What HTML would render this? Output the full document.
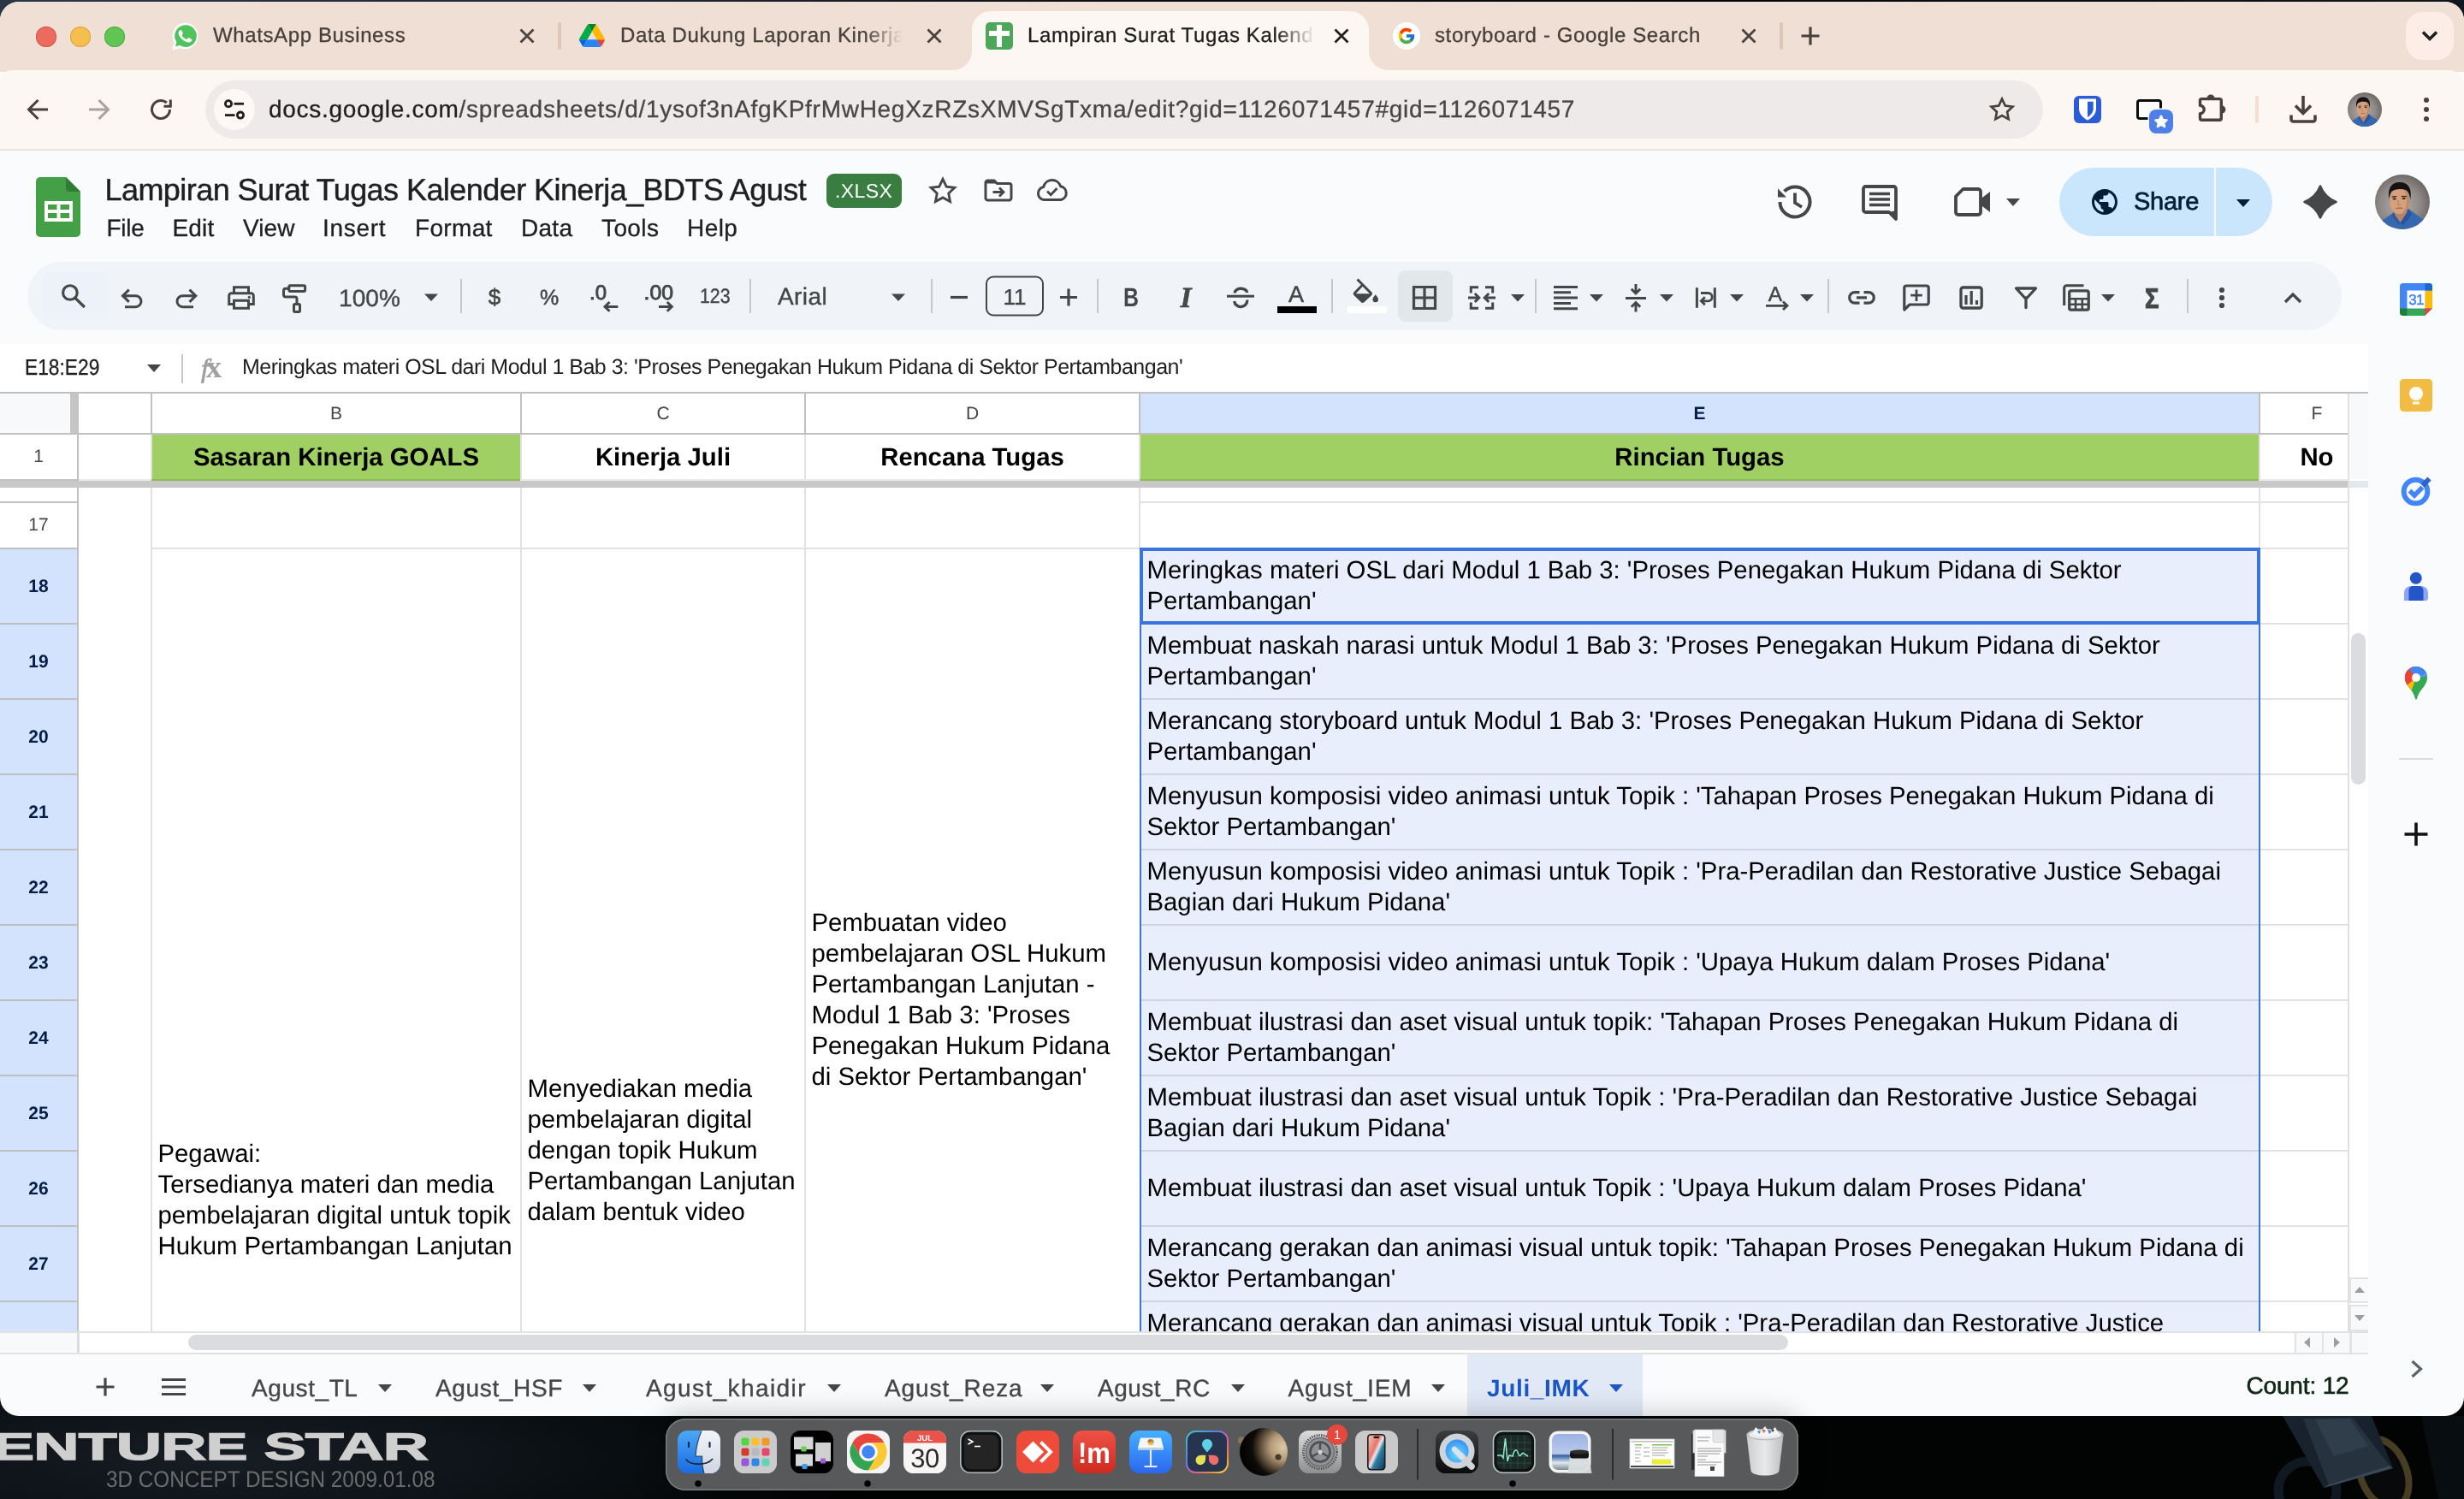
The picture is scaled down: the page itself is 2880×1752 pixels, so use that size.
<!DOCTYPE html>
<html lang="id">
<head>
<meta charset="utf-8">
<title>Lampiran Surat Tugas Kalender Kinerja_BDTS Agust - Google Sheets</title>
<style>
*{box-sizing:border-box;margin:0;padding:0}
html,body{width:2880px;height:1752px;overflow:hidden;background:#000}
body{font-family:"Liberation Sans",sans-serif;color:#1f1f1f;position:relative;-webkit-font-smoothing:antialiased;text-rendering:geometricPrecision}
#root{position:absolute;left:0;top:0;width:2880px;height:1752px;will-change:transform}
.abs{position:absolute}
svg{position:absolute;overflow:visible}
.t{position:absolute;white-space:nowrap;line-height:1}
/* desktop */
#desk{position:absolute;left:0;top:0;width:2880px;height:1752px;background:
 radial-gradient(ellipse 760px 150px at 260px 1705px,#161d24 0%,#0b1014 55%,rgba(0,0,0,0) 100%),
 #020303}
#desktop-top{position:absolute;left:0;top:0;width:2880px;height:24px;background:linear-gradient(90deg,#2a3646 0%,#1e2836 25%,#0b0f14 45%,#05070a 70%,#10161d 100%)}
/* window */
#win{position:absolute;left:0;top:2px;width:2880px;height:1653px;border-radius:22px 22px 22px 22px;overflow:hidden;background:#f9fbfd}
#tabstrip{position:absolute;left:0;top:0;width:2880px;height:82px;background:#f0dfd5}
#toolbar{position:absolute;left:0;top:80px;width:2880px;height:92px;background:#fdf7f3;border-radius:14px 18px 0 0}
#toolbar-line{position:absolute;left:0;top:172px;width:2880px;height:2px;background:#ebe1dc}
.tabtitle{position:absolute;-webkit-text-stroke:.3px currentColor;white-space:nowrap;font-size:24px;line-height:30px;top:27px;color:#47403b;letter-spacing:.62px}
.gridtxt{position:absolute;margin-top:1px;white-space:nowrap;font-size:29.33px;line-height:36px;color:#000}
.rowh{position:absolute;left:0;width:90px;text-align:center;font-size:21px;color:#444746}
.rowh.sel{background:#d3e3fd;color:#041e49;font-weight:bold}
.colh{position:absolute;top:460px;height:46px;line-height:47.500px;text-align:center;font-size:21px;color:#444746;background:#fff}
.hl{position:absolute;height:2px;background:#e1e1e1}
.vl{position:absolute;width:2px;background:#e1e1e1}
.sheettab{position:absolute;top:1606px;-webkit-text-stroke:.35px currentColor;white-space:nowrap;font-size:28px;line-height:34px;color:#444746}
.dd{position:absolute;width:0;height:0;border-left:8px solid transparent;border-right:8px solid transparent;border-top:9px solid #444746}
.tbsep{position:absolute;top:324px;width:2px;height:40px;background:#c7c7c7}
</style>
</head>
<body>
<div id="root">
<div id="desk"></div>
<div id="desktop-top"></div>
<div class="t" style="left:-9px;top:1669.500px;font-size:44.500px;font-weight:bold;color:#cfcfcf;letter-spacing:-.5px;transform:scaleX(1.655);transform-origin:0 0;-webkit-text-stroke:1.300px #cfcfcf">ENTURE STAR</div>
<div class="t" style="left:124px;top:1716px;font-size:27px;color:#6c6c6c;transform:scaleX(.9);transform-origin:0 0">3D CONCEPT DESIGN 2009.01.08</div>
<svg id="deskobj" style="left:2600px;top:1650px" width="280" height="102" viewBox="2600 1650 280 102"><circle cx="2697" cy="1742" r="34" fill="none" stroke="#101921" stroke-width="11"/><ellipse cx="2786" cy="1722" rx="27" ry="42" fill="#07090b" stroke="#463d22" stroke-width="8" transform="rotate(-22 2786 1722)"/><path d="M2668 1655L2772 1655L2797 1716L2716 1739Z" fill="#18222c"/><path d="M2692 1658L2750 1657L2793 1713L2722 1735Z" fill="#26333f"/><path d="M2706 1659L2746 1658L2768 1690L2728 1702Z" fill="#303e4b"/><path d="M2722 1735L2793 1713L2797 1716L2716 1739Z" fill="#3a4754"/><path d="M2830 1655L2880 1655L2880 1752L2850 1752Z" fill="#080d12"/></svg>
<div id="win">
 <div id="tabstrip"></div>
 <div id="toolbar"></div>
 <div id="toolbar-line"></div>
</div>
<!-- traffic lights -->
<div class="abs" style="left:42px;top:31px;width:24px;height:24px;border-radius:50%;background:#ed6a5e;box-shadow:inset 0 0 0 1px #d5554a"></div>
<div class="abs" style="left:82px;top:31px;width:24px;height:24px;border-radius:50%;background:#f5bf4f;box-shadow:inset 0 0 0 1px #d9a33c"></div>
<div class="abs" style="left:122px;top:31px;width:24px;height:24px;border-radius:50%;background:#61c554;box-shadow:inset 0 0 0 1px #4faa43"></div>
<!-- active tab shape -->
<svg style="left:0;top:0" width="2880" height="90" viewBox="0 0 2880 90"><path d="M1114 82A22 22 0 0 0 1136 60V35A22 22 0 0 1 1158 13H1578A22 22 0 0 1 1600 35V60A22 22 0 0 0 1622 82Z" fill="#fdf7f3"/></svg>
<!-- tab 1: WhatsApp -->
<svg style="left:199px;top:25px" width="36" height="36" viewBox="0 0 36 36"><path d="M18 1.6A15.4 15.4 0 0 0 4.7 24.8L2.2 33.6l9-2.4A15.4 15.4 0 1 0 18 1.6Z" fill="#fff"/><path d="M18 4.3a12.8 12.8 0 0 0-10.9 19.5l.3.5-1.4 5 5.2-1.4.5.3A12.8 12.8 0 1 0 18 4.3Z" fill="#50c35c"/><path d="M13.2 10.4c-.3-.7-.6-.7-.9-.7h-.8c-.3 0-.7.1-1.1.5-.4.4-1.4 1.4-1.4 3.400 0 2 1.500 3.900 1.700 4.200.2.300 2.900 4.600 7.100 6.200 3.500 1.400 4.200 1.100 5 1 .800-.1 2.400-1 2.800-1.900.300-1 .300-1.800.200-1.900-.1-.2-.4-.3-.8-.5l-2.800-1.400c-.4-.1-.7-.2-1 .2-.3.400-1.100 1.400-1.300 1.600-.2.300-.5.300-.9.100-.4-.2-1.700-.6-3.300-2-1.200-1.100-2-2.400-2.300-2.800-.2-.4 0-.6.200-.8l.6-.7c.2-.200.300-.4.400-.7.100-.3.100-.5 0-.7z" fill="#fff" transform="translate(1.2,1.2) scale(.93)"/></svg>
<div class="tabtitle" style="left:249px">WhatsApp Business</div>
<svg style="left:606px;top:32px" width="20" height="20" viewBox="0 0 20 20"><path d="M2.500 2.500L17.500 17.500M17.500 2.500L2.500 17.500" stroke="#47403b" stroke-width="2.800" fill="none"/></svg>
<div class="abs" style="left:652px;top:26px;width:4px;height:32px;border-radius:2px;background:#dcc6b9"></div>
<!-- tab 2: Drive -->
<svg style="left:677px;top:28px" width="30" height="27" viewBox="0 0 87.3 78"><path d="m6.6 66.850 3.850 6.650c.8 1.400 1.950 2.500 3.300 3.300l13.750-23.800h-27.500c0 1.550.4 3.100 1.200 4.500z" fill="#0066da"/><path d="m43.650 25-13.750-23.800c-1.350.8-2.500 1.900-3.300 3.300l-25.400 44a9.060 9.060 0 0 0 -1.200 4.500h27.500z" fill="#00ac47"/><path d="m73.550 76.800c1.350-.8 2.500-1.900 3.300-3.300l1.600-2.750 7.650-13.250c.8-1.400 1.200-2.950 1.200-4.500h-27.502l5.852 11.500z" fill="#ea4335"/><path d="m43.650 25 13.750-23.800c-1.350-.8-2.900-1.200-4.500-1.200h-18.500c-1.600 0-3.150.45-4.500 1.200z" fill="#00832d"/><path d="m59.800 53h-32.300l-13.750 23.800c1.350.8 2.900 1.200 4.500 1.200h50.800c1.600 0 3.150-.45 4.500-1.200z" fill="#2684fc"/><path d="m73.400 26.500-12.700-22c-.8-1.400-1.950-2.500-3.300-3.300l-13.750 23.800 16.150 28h27.450c0-1.550-.4-3.100-1.200-4.500z" fill="#ffba00"/></svg>
<div class="tabtitle" style="left:725px;width:332px;overflow:hidden;-webkit-mask-image:linear-gradient(90deg,#000 0,#000 285px,transparent 330px);mask-image:linear-gradient(90deg,#000 0,#000 285px,transparent 330px)">Data Dukung Laporan Kinerja - Google Drive</div>
<svg style="left:1082px;top:32px" width="20" height="20" viewBox="0 0 20 20"><path d="M2.500 2.500L17.500 17.500M17.500 2.500L2.500 17.500" stroke="#47403b" stroke-width="2.800" fill="none"/></svg>
<!-- tab 3: Sheets (active) -->
<div class="abs" style="left:1152px;top:26px;width:32px;height:32px;border-radius:5px;background:#4ca75b"></div>
<div class="abs" style="left:1165px;top:29px;width:6px;height:26px;background:#fff"></div>
<div class="abs" style="left:1156px;top:36px;width:24px;height:6px;background:#fff"></div>
<div class="tabtitle" style="left:1201px;width:338px;color:#1f1f1f;overflow:hidden;-webkit-mask-image:linear-gradient(90deg,#000 0,#000 290px,transparent 336px);mask-image:linear-gradient(90deg,#000 0,#000 290px,transparent 336px)">Lampiran Surat Tugas Kalender Kinerja_BDTS Agust - Google Sheets</div>
<svg style="left:1558px;top:32px" width="20" height="20" viewBox="0 0 20 20"><path d="M2.500 2.500L17.500 17.500M17.500 2.500L2.500 17.500" stroke="#1f1f1f" stroke-width="2.800" fill="none"/></svg>
<!-- tab 4: Google -->
<div class="abs" style="left:1628px;top:26px;width:32px;height:32px;border-radius:50%;background:#fff"></div>
<svg style="left:1633px;top:31px" width="22" height="22" viewBox="0 0 48 48"><path fill="#ffc107" d="M43.600 20.100H42V20H24v8h11.300c-1.600 4.700-6.100 8-11.300 8-6.600 0-12-5.400-12-12s5.400-12 12-12c3.100 0 5.800 1.200 8 3l5.700-5.700C34 6.100 29.300 4 24 4 13 4 4 13 4 24s9 20 20 20 20-9 20-20c0-1.300-.1-2.600-.4-3.900z"/><path fill="#ff3d00" d="M6.300 14.700l6.600 4.800C14.700 15.100 19 12 24 12c3.100 0 5.800 1.200 8 3l5.700-5.700C34 6.100 29.300 4 24 4 16.300 4 9.700 8.300 6.300 14.700z"/><path fill="#4caf50" d="M24 44c5.200 0 9.900-2 13.400-5.200l-6.200-5.200A11.900 11.900 0 0 1 24 36c-5.200 0-9.600-3.300-11.300-7.900l-6.500 5C9.500 39.600 16.200 44 24 44z"/><path fill="#1976d2" d="M43.600 20.100H42V20H24v8h11.300a12 12 0 0 1-4.100 5.600l6.200 5.200C37 39.200 44 34 44 24c0-1.300-.1-2.600-.4-3.900z"/></svg>
<div class="tabtitle" style="left:1677px">storyboard - Google Search</div>
<svg style="left:2034px;top:32px" width="20" height="20" viewBox="0 0 20 20"><path d="M2.500 2.500L17.500 17.500M17.500 2.500L2.500 17.500" stroke="#47403b" stroke-width="2.800" fill="none"/></svg>
<div class="abs" style="left:2080px;top:26px;width:4px;height:32px;border-radius:2px;background:#dcc6b9"></div>
<svg style="left:2104px;top:30px" width="24" height="24" viewBox="0 0 24 24"><path d="M12 1.500V22.500M1.500 12H22.500" stroke="#47403b" stroke-width="3.200" fill="none"/></svg>
<!-- tab search -->
<div class="abs" style="left:2812px;top:14px;width:56px;height:56px;border-radius:20px;background:#fceee7"></div>
<svg style="left:2828px;top:32px" width="24" height="20" viewBox="0 0 24 20"><path d="M4 5.500L12 13.500L20 5.500" stroke="#1f1f1f" stroke-width="3.600" fill="none"/></svg>
<!-- nav buttons -->
<svg style="left:28px;top:112px" width="32" height="32" viewBox="0 0 32 32"><path d="M28 16H6M16.500 5L5.500 16L16.500 27" stroke="#47403b" stroke-width="3" fill="none"/></svg>
<svg style="left:100px;top:112px" width="32" height="32" viewBox="0 0 32 32"><path d="M4 16H26M15.500 5L26.500 16L15.500 27" stroke="#a9a19c" stroke-width="3" fill="none"/></svg>
<svg style="left:172px;top:112px" width="32" height="32" viewBox="0 0 32 32"><path d="M26.500 16A10.500 10.500 0 1 1 22.800 8" stroke="#47403b" stroke-width="3" fill="none"/><path d="M27.300 4.500V12.300H19.500" stroke="#47403b" stroke-width="3" fill="none"/></svg>
<!-- omnibox -->
<div class="abs" style="left:240px;top:94px;width:2148px;height:68px;border-radius:34px;background:#eeeaea"></div>
<div class="abs" style="left:250px;top:104px;width:48px;height:48px;border-radius:50%;background:#fdf8f5"></div>
<svg style="left:258px;top:112px" width="32" height="32" viewBox="0 0 32 32"><circle cx="9" cy="9.300" r="3.600" stroke="#1f1f1f" stroke-width="2.800" fill="none"/><path d="M15.500 9.300H27" stroke="#1f1f1f" stroke-width="2.800"/><path d="M5 22.600H16.500" stroke="#1f1f1f" stroke-width="2.800"/><circle cx="23" cy="22.600" r="3.600" stroke="#1f1f1f" stroke-width="2.800" fill="none"/></svg>
<div class="t" style="left:314px;top:113.500px;font-size:28px;letter-spacing:.72px;color:#474747;-webkit-text-stroke:.3px currentColor"><span style="color:#1f1f1f">docs.google.com</span>/spreadsheets/d/1ysof3nAfgKPfrMwHegXzRZsXMVSgTxma/edit?gid=1126071457#gid=1126071457</div>
<svg style="left:2323px;top:111px" width="34" height="34" viewBox="0 0 24 24"><path d="M12 3.300l2.650 5.600 6.100.8-4.450 4.250 1.100 6.050L12 17.050 6.600 20l1.100-6.050L3.250 9.700l6.100-.8z" stroke="#47403b" stroke-width="1.900" fill="none" stroke-linejoin="miter"/></svg>
<!-- extensions -->
<div class="abs" style="left:2424px;top:112px;width:32px;height:32px;border-radius:6px;background:#2c5bd8"></div>
<svg style="left:2424px;top:112px" width="32" height="32" viewBox="0 0 32 32"><path d="M6 3.500H26V15c0 6.500-5 11-10 13.500C11 26 6 21.500 6 15Z" fill="#fff"/><path d="M16 6.800H22.700V15c0 4.600-3.400 7.900-6.700 9.900Z" fill="#2c5bd8"/></svg>
<div class="abs" style="left:2497px;top:116px;width:30px;height:24px;border:3.500px solid #0c0c0c;border-radius:4px;background:#fcfcfc"></div>
<div class="abs" style="left:2512px;top:128px;width:28px;height:28px;border-radius:8px;background:#4f80ea;box-shadow:0 0 0 1.500px #fdf7f3"></div>
<svg style="left:2516px;top:132px" width="20" height="20" viewBox="0 0 24 24"><path d="M12 4.500l2.300 5 5.500.6-4.100 3.700 1.200 5.400L12 16.400 7.100 19.200l1.200-5.400L4.200 10.100l5.500-.6z" fill="#fff" stroke="#fff" stroke-width="3" stroke-linejoin="round"/></svg>
<svg style="left:2560px;top:100px" width="60" height="60" viewBox="2560 100 60 60"><path d="M2571.500 123.300V117.600a2 2 0 0 1 2-2H2594.300a2 2 0 0 1 2 2V138.300a2 2 0 0 1-2 2H2573.500a2 2 0 0 1-2-2V132.700A4.700 4.700 0 0 0 2571.500 123.300Z" stroke="#47403b" stroke-width="3.400" fill="none" stroke-linejoin="round"/><path d="M2579.300 115.300a4.700 4.700 0 0 1 9.400 0Z" fill="#47403b"/><path d="M2596.700 123.300a4.700 4.700 0 0 1 0 9.400Z" fill="#47403b"/></svg>
<div class="abs" style="left:2636px;top:112px;width:4px;height:32px;border-radius:2px;background:#f5ddd0"></div>
<svg style="left:2676px;top:110px" width="32" height="36" viewBox="0 0 32 36"><path d="M16 2V22M7 13.500L16 22.500L25 13.500" stroke="#47403b" stroke-width="3.600" fill="none"/><path d="M2 24.500V29.500a2.500 2.500 0 0 0 2.500 2.500H27.500a2.500 2.500 0 0 0 2.500-2.500V24.500" stroke="#47403b" stroke-width="3.600" fill="none"/></svg>
<svg style="left:2744px;top:108px" width="40" height="40" viewBox="0 0 40 40"><defs><clipPath id="av1"><circle cx="20" cy="20" r="20"/></clipPath><radialGradient id="avbg" cx=".45" cy=".55" r=".62"><stop offset="0" stop-color="#b3afac"/><stop offset=".6" stop-color="#8e8986"/><stop offset="1" stop-color="#645f5c"/></radialGradient></defs><g clip-path="url(#av1)"><rect width="40" height="40" fill="url(#avbg)"/><path d="M3 35L13.700 27.700 17.500 31 24.300 25 35.500 33 38 40H1Z" fill="#3668b2"/><path d="M14 23L22.500 22 23.500 27.500 18.500 35 14.200 29Z" fill="#b98363"/><path d="M13.700 27.700L14.500 29.500 18.500 35.500 17 36.500 12 30Z" fill="#2d5aa3"/><path d="M24.300 25L23.500 27.500 18.500 35.500 20.500 37 27 29Z" fill="#2a559c"/><ellipse cx="17.900" cy="19.300" rx="7.200" ry="9.500" fill="#d5a07b"/><path d="M21 11C24 13 25.300 17 25 21 24.500 25 22 28 19 28.700 22.500 26 23.500 22 23 18 22.700 15 22 13 21 11Z" fill="#b07e5e" opacity=".65"/><path d="M10.300 18C8.800 9.500 12.500 5.500 18 5.600 24.200 5.700 27.200 9.800 25.800 18.500 25.300 14.500 24.300 12.300 22.500 11.300 18.500 10 14.500 10.800 12.300 12.200 11 13.500 10.600 15.500 10.300 18Z" fill="#17120f"/><path d="M12.300 16.300L15.800 16M19.300 15.800L23 16" stroke="#2a1d16" stroke-width=".8"/><ellipse cx="14.200" cy="17.800" rx="1.300" ry=".65" fill="#2b2019"/><ellipse cx="21" cy="17.500" rx="1.300" ry=".65" fill="#2b2019"/><path d="M17 18.500L16.600 22.200 18.600 22.300" stroke="#b5825f" stroke-width=".7" fill="none"/><path d="M15.300 24.800Q17.800 24.200 20.300 24.600" stroke="#9c6555" stroke-width=".9" fill="none"/></g></svg>
<div class="abs" style="left:2833px;top:114px;width:6px;height:6px;border-radius:50%;background:#47403b;box-shadow:0 11px 0 #47403b,0 22px 0 #47403b"></div>
<!-- Sheets logo -->
<svg style="left:42px;top:207px" width="52" height="70" viewBox="0 0 52 70"><path d="M5 0H35L52 17V65a5 5 0 0 1-5 5H5a5 5 0 0 1-5-5V5a5 5 0 0 1 5-5Z" fill="#43a047"/><path d="M35 0L52 17H38.500a3.500 3.500 0 0 1-3.500-3.500Z" fill="#2e7d32"/><path d="M10 28H43V52H10ZM14 32V38H24.500V32ZM28.500 32V38H39V32ZM14 42V48H24.500V42ZM28.500 42V48H39V42Z" fill="#fff" fill-rule="evenodd"/></svg>
<div class="t" style="left:122.500px;top:203.500px;font-size:36px;letter-spacing:-.56px;color:#1f1f1f;-webkit-text-stroke:.45px #1f1f1f">Lampiran Surat Tugas Kalender Kinerja_BDTS Agust</div>
<!-- XLSX badge -->
<div class="abs" style="left:966px;top:203px;width:88px;height:40px;border-radius:9px;background:#3a7d40"></div>
<div class="t" style="left:976px;top:212px;font-size:23px;color:#fff;letter-spacing:.4px">.XLSX</div>
<svg style="left:1084px;top:205px" width="36" height="36" viewBox="0 0 24 24"><path d="M12 2.900l2.800 5.900 6.400.8-4.700 4.400 1.200 6.400L12 17.300 6.300 20.400l1.200-6.400L2.800 9.600l6.400-.8z" stroke="#444746" stroke-width="1.900" fill="none"/></svg>
<svg style="left:1150px;top:208px" width="34" height="28" viewBox="0 0 34 28"><path d="M2 5.500a2.500 2.500 0 0 1 2.500-2.500H12l3.500 3.500H29.500a2.500 2.500 0 0 1 2.500 2.500V23.500a2.500 2.500 0 0 1-2.500 2.500H4.500a2.500 2.500 0 0 1-2.500-2.500Z" stroke="#444746" stroke-width="3" fill="none"/><path d="M2 3h11l3 3.500H2Z" fill="#444746"/><path d="M10.500 16.500H22.500M18 11.500l5 5-5 5" stroke="#444746" stroke-width="2.800" fill="none"/></svg>
<svg style="left:1211px;top:208px" width="38" height="28" viewBox="0 0 38 28"><path d="M10 25.500a7.500 7.500 0 0 1-1.300-14.900A10.300 10.300 0 0 1 28.600 9.800 8 8 0 0 1 29 25.500Z" stroke="#444746" stroke-width="3" fill="none" stroke-linejoin="round"/><path d="M13 15.500l4.200 4.200L24.500 12" stroke="#444746" stroke-width="2.800" fill="none"/></svg>
<!-- menus -->
<div class="t" style="left:124.500px;top:253px;font-size:28px;letter-spacing:-0.3px;color:#1f1f1f;-webkit-text-stroke:.3px #1f1f1f">File</div>
<div class="t" style="left:201.500px;top:253px;font-size:28px;letter-spacing:0.15px;color:#1f1f1f;-webkit-text-stroke:.3px #1f1f1f">Edit</div>
<div class="t" style="left:284px;top:253px;font-size:28px;letter-spacing:0.07px;color:#1f1f1f;-webkit-text-stroke:.3px #1f1f1f">View</div>
<div class="t" style="left:377px;top:253px;font-size:28px;letter-spacing:0.7px;color:#1f1f1f;-webkit-text-stroke:.3px #1f1f1f">Insert</div>
<div class="t" style="left:485px;top:253px;font-size:28px;letter-spacing:0.33px;color:#1f1f1f;-webkit-text-stroke:.3px #1f1f1f">Format</div>
<div class="t" style="left:609px;top:253px;font-size:28px;letter-spacing:0.27px;color:#1f1f1f;-webkit-text-stroke:.3px #1f1f1f">Data</div>
<div class="t" style="left:703px;top:253px;font-size:28px;letter-spacing:0.4px;color:#1f1f1f;-webkit-text-stroke:.3px #1f1f1f">Tools</div>
<div class="t" style="left:803px;top:253px;font-size:28px;letter-spacing:0.43px;color:#1f1f1f;-webkit-text-stroke:.3px #1f1f1f">Help</div>
<!-- right icons -->
<svg style="left:2074px;top:214px" width="46" height="44" viewBox="0 0 46 44"><path d="M6.500 22A17.500 17.500 0 1 0 11.600 9.600" stroke="#444746" stroke-width="4" fill="none"/><path d="M4 6.500V16.500H14Z" fill="#444746"/><path d="M24 11.500V23L32 28" stroke="#444746" stroke-width="3.800" fill="none"/></svg>
<svg style="left:2176px;top:216px" width="42" height="42" viewBox="0 0 42 42"><path d="M4.500 2H37.500a2.500 2.500 0 0 1 2.500 2.500V40L32 32H4.500a2.500 2.500 0 0 1-2.500-2.500V4.500a2.500 2.500 0 0 1 2.500-2.500Z" stroke="#444746" stroke-width="3.800" fill="none" stroke-linejoin="round"/><path d="M32 32L40 40V30Z" fill="#444746"/><path d="M9 10.500H33M9 17H33M9 23.500H33" stroke="#444746" stroke-width="3.400"/></svg>
<svg style="left:2284px;top:219px" width="44" height="34" viewBox="0 0 44 34"><path d="M10.500 2H28a3 3 0 0 1 3 3V29a3 3 0 0 1-3 3H5a3 3 0 0 1-3-3V10.500Z" stroke="#444746" stroke-width="3.800" fill="none" stroke-linejoin="round"/><path d="M31 13.500L42 5V29L31 20.500Z" fill="#444746"/></svg>
<div class="dd" style="left:2345px;top:232px"></div>
<!-- share -->
<div class="abs" style="left:2407px;top:196px;width:249px;height:80px;border-radius:40px;background:#c9e6fc"></div>
<div class="abs" style="left:2588px;top:196px;width:2px;height:80px;background:#f9fbfd"></div>
<svg style="left:2442px;top:218px" width="36" height="36" viewBox="0 0 24 24"><path fill="#001d35" d="M12 2C6.480 2 2 6.480 2 12s4.480 10 10 10 10-4.480 10-10S17.520 2 12 2zm-1 17.930c-3.950-.49-7-3.850-7-7.930 0-.62.080-1.210.210-1.790L9 15v1c0 1.100.9 2 2 2v1.930zm6.900-2.540c-.26-.81-1-1.390-1.900-1.390h-1v-3c0-.55-.45-1-1-1H8v-2h2c.55 0 1-.45 1-1V7h2c1.100 0 2-.9 2-2v-.41c2.930 1.190 5 4.060 5 7.410 0 2.080-.8 3.970-2.100 5.390z"/></svg>
<div class="t" style="left:2494px;top:222px;font-size:29px;letter-spacing:-.25px;color:#001d35;-webkit-text-stroke:.7px #001d35">Share</div>
<div class="dd" style="left:2614px;top:233px;border-top-color:#001d35"></div>
<!-- gemini -->
<svg style="left:2691px;top:215px" width="42" height="42" viewBox="0 0 42 42"><path d="M21 2.500Q26.300 15.700 39.500 21Q26.300 26.300 21 39.500Q15.700 26.300 2.500 21Q15.700 15.700 21 2.500Z" fill="#474747" stroke="#474747" stroke-width="2.500" stroke-linejoin="round"/></svg>
<!-- avatar -->
<svg style="left:2776px;top:204px" width="64" height="64" viewBox="0 0 40 40"><defs><clipPath id="av2"><circle cx="20" cy="20" r="20"/></clipPath></defs><g clip-path="url(#av2)"><rect width="40" height="40" fill="url(#avbg)"/><path d="M3 35L13.700 27.700 17.500 31 24.300 25 35.500 33 38 40H1Z" fill="#3668b2"/><path d="M14 23L22.500 22 23.500 27.500 18.500 35 14.200 29Z" fill="#b98363"/><path d="M13.700 27.700L14.500 29.500 18.500 35.500 17 36.500 12 30Z" fill="#2d5aa3"/><path d="M24.300 25L23.500 27.500 18.500 35.500 20.500 37 27 29Z" fill="#2a559c"/><ellipse cx="17.900" cy="19.300" rx="7.200" ry="9.500" fill="#d5a07b"/><path d="M21 11C24 13 25.300 17 25 21 24.500 25 22 28 19 28.700 22.500 26 23.500 22 23 18 22.700 15 22 13 21 11Z" fill="#b07e5e" opacity=".65"/><path d="M10.300 18C8.800 9.500 12.500 5.500 18 5.600 24.200 5.700 27.200 9.800 25.800 18.500 25.300 14.500 24.300 12.300 22.500 11.300 18.500 10 14.500 10.800 12.300 12.200 11 13.500 10.600 15.500 10.300 18Z" fill="#17120f"/><path d="M12.300 16.300L15.800 16M19.300 15.800L23 16" stroke="#2a1d16" stroke-width=".8"/><ellipse cx="14.200" cy="17.800" rx="1.300" ry=".65" fill="#2b2019"/><ellipse cx="21" cy="17.500" rx="1.300" ry=".65" fill="#2b2019"/><path d="M17 18.500L16.600 22.200 18.600 22.300" stroke="#b5825f" stroke-width=".7" fill="none"/><path d="M15.300 24.800Q17.800 24.200 20.300 24.600" stroke="#9c6555" stroke-width=".9" fill="none"/></g></svg>
<!-- toolbar pill -->
<div class="abs" style="left:32px;top:306px;width:2705px;height:80px;border-radius:40px;background:#f0f4f9"></div>
<div class="abs" style="left:50px;top:318px;width:76px;height:56px;border-radius:8px;background:#edf2fa"></div>
<div class="abs" style="left:1634px;top:316px;width:64px;height:60px;border-radius:9px;background:#e2e7ea"></div>
<svg style="left:0;top:300px" width="2880" height="100" viewBox="0 300 2880 100" fill="none" stroke="#444746" stroke-width="3" font-family="Liberation Sans, sans-serif">
<!-- search -->
<circle cx="81.900" cy="342" r="8.300" stroke-width="3.100"/><path d="M88 348.300L98.800 359" stroke-width="3.300"/>
<!-- undo -->
<path d="M150.800 338.600L143.500 345.700L150.800 352.800M144 345.700H158.500A6.500 6.500 0 0 1 158.500 358.700H146"/>
<!-- redo -->
<path d="M221.500 338.600L228.800 345.700L221.500 352.800M228 345.700H213.500A6.500 6.500 0 0 0 213.500 358.700H226"/>
<!-- print -->
<path d="M273.500 342.500V335.800H290.500V342.500M273.500 355.500H267.700V345.500a2.800 2.800 0 0 1 2.800-2.800H293.500a2.800 2.800 0 0 1 2.800 2.800V355.500H290.500M273.500 351.300H290.500V360.300H273.500Z"/><circle cx="291.300" cy="347.300" r="1.600" fill="#444746" stroke="none"/>
<!-- paint roller -->
<rect x="337.800" y="333.800" width="18.800" height="6.800" rx="1.500"/><path d="M337.500 337.200H334a2.500 2.500 0 0 0-2.500 2.500V344.500a2.500 2.500 0 0 0 2.500 2.500H344.500a2.500 2.500 0 0 1 2.500 2.500V355"/><rect x="343.500" y="355.500" width="7" height="9" rx="1.500"/>
<!-- 100% -->
<text x="396" y="358" font-size="28" fill="#444746" stroke="#444746" stroke-width=".4" letter-spacing=".1">100%</text>
<path d="M496 343.500H512L504 352Z" fill="#444746" stroke="none"/>
<path d="M539 326V366" stroke="#c7c7c7" stroke-width="2"/>
<!-- $ % .0 .00 123 -->
<text x="578" y="356" font-size="26" fill="#444746" stroke="#444746" stroke-width=".6" text-anchor="middle">$</text>
<text x="642" y="355.500" font-size="25" fill="#444746" stroke="#444746" stroke-width=".5" text-anchor="middle">%</text>
<text x="689" y="350" font-size="24" fill="#444746" stroke="#444746" stroke-width=".9" textLength="20" lengthAdjust="spacingAndGlyphs">.0</text>
<path d="M722.300 358.400H707M712.500 353L707 358.400L712.500 363.800"/>
<text x="752.500" y="350" font-size="24" fill="#444746" stroke="#444746" stroke-width=".9" textLength="34.500" lengthAdjust="spacingAndGlyphs">.00</text>
<path d="M770 358.400H785.300M779.800 353L785.300 358.400L779.800 363.800"/>
<text x="818" y="354.200" font-size="24" fill="#444746" stroke="#444746" stroke-width=".4" textLength="35.500" lengthAdjust="spacingAndGlyphs">123</text>
<path d="M877 326V366" stroke="#c7c7c7" stroke-width="2"/>
<!-- font -->
<text x="909" y="355.800" font-size="28" fill="#444746" stroke="#444746" stroke-width=".4" letter-spacing=".4">Arial</text>
<path d="M1042 343.500H1058L1050 352Z" fill="#444746" stroke="none"/>
<path d="M1089 326V366" stroke="#c7c7c7" stroke-width="2"/>
<path d="M1111 347.500H1131" stroke-width="3.200"/>
<rect x="1153" y="323.500" width="66" height="45" rx="8" stroke-width="2"/>
<text x="1186" y="356" font-size="26" fill="#444746" stroke="#444746" stroke-width=".4" text-anchor="middle">11</text>
<path d="M1239 347.500H1259M1249 337.500V357.500" stroke-width="3.200"/>
<path d="M1283 326V366" stroke="#c7c7c7" stroke-width="2"/>
<!-- B I S A -->
<text x="1313" y="358.300" font-size="31" font-weight="bold" fill="#444746" stroke="none" textLength="18" lengthAdjust="spacingAndGlyphs">B</text>
<text x="1386" y="359.300" font-family="Liberation Serif, serif" font-style="italic" font-weight="bold" font-size="34" fill="#444746" stroke="#444746" stroke-width=".5" text-anchor="middle">I</text>
<path d="M1434 346.200H1466"/><path d="M1443.300 342.500a7.200 5 0 0 1 14.400-.5M1457.700 350.500a7.400 7.200 0 0 1-15 1.500" stroke-width="3.400"/>
<text x="1515" y="352.800" font-size="27" fill="#444746" stroke="#444746" stroke-width=".5" text-anchor="middle">A</text>
<rect x="1493" y="358" width="46" height="8" fill="#000" stroke="none"/>
<path d="M1557 326V366" stroke="#c7c7c7" stroke-width="2"/>
<!-- fill -->
<path d="M1586.500 326.500L1592.700 332.800M1592.700 332.800L1602.200 342.500a1.200 1.200 0 0 1 0 1.500L1593.700 352a1.500 1.500 0 0 1-2 0L1583.500 344a1.200 1.200 0 0 1 0-1.500Z" stroke-width="3"/><path d="M1584 343.300H1602L1593.700 351.500a1.500 1.500 0 0 1-2 0Z" fill="#444746" stroke="none"/><path d="M1607.700 344.200c2 2.500 3.300 4.300 3.300 5.800a3.300 3.300 0 0 1-6.600 0c0-1.500 1.300-3.300 3.300-5.800Z" fill="#444746" stroke="none"/>
<rect x="1575" y="358" width="46" height="8" fill="#fff" stroke="none"/>
<!-- borders -->
<path d="M1652.500 335.500H1677.500V360.500H1652.500ZM1665 335.500V360.500M1652.500 348H1677.500" stroke-width="3.200"/>
<!-- merge -->
<path d="M1728 335.800H1719.300V342.500M1719.300 353.500V360.300H1728M1736 335.800H1744.700V342.500M1744.700 353.500V360.300H1736" stroke-width="3"/><path d="M1716 348H1728.500M1723.800 343L1728.800 348L1723.800 353M1748 348H1735.500M1740.200 343L1735.200 348L1740.200 353" stroke-width="3"/>
<path d="M1766 344H1782L1774 352.500Z" fill="#444746" stroke="none"/>
<path d="M1795 326V366" stroke="#c7c7c7" stroke-width="2"/>
<!-- halign -->
<path d="M1816 335.400H1844M1816 341.700H1836M1816 348H1844M1816 354.400H1836M1816 360.700H1844" stroke-width="3"/>
<path d="M1858 344H1874L1866 352.500Z" fill="#444746" stroke="none"/>
<!-- valign -->
<path d="M1900 348.400H1924M1912 332V342.500M1906.800 337.800L1912 343L1917.200 337.800M1912 364.500V354M1906.800 358.700L1912 353.500L1917.200 358.700" stroke-width="3"/>
<path d="M1940 344H1956L1948 352.500Z" fill="#444746" stroke="none"/>
<!-- wrap -->
<path d="M1983.400 336.200V359.800M2004.300 336.200V359.800" stroke-width="3"/><path d="M1988 342.500H1996.500a4.600 4.600 0 0 1 0 9.300H1989M1992.800 347.300L1988.300 351.800L1992.800 356.300" stroke-width="2.800"/>
<path d="M2022 344H2038L2030 352.500Z" fill="#444746" stroke="none"/>
<!-- rotate -->
<text x="2075" y="351.800" font-size="24.500" fill="#444746" stroke="#444746" stroke-width=".5" text-anchor="middle">A</text>
<path d="M2064 357.300H2088.500M2084 352.500L2089 357.300L2084 362.100" stroke-width="2.800"/>
<path d="M2104 344H2120L2112 352.500Z" fill="#444746" stroke="none"/>
<path d="M2137 326V366" stroke="#c7c7c7" stroke-width="2"/>
<!-- link -->
<path d="M2173.500 341.600H2168a6.300 6.300 0 0 0 0 12.600H2173.500M2178.500 341.600H2184a6.300 6.300 0 0 1 0 12.600H2178.500M2170 347.900H2182" stroke-width="3.200"/>
<!-- comment+ -->
<path d="M2228.300 334H2251.700a2.500 2.500 0 0 1 2.500 2.500V353.500a2.500 2.500 0 0 1-2.500 2.500H2232L2225.800 362V336.500a2.500 2.500 0 0 1 2.500-2.500Z" stroke-width="3.200" stroke-linejoin="round"/><path d="M2240 338.500V352M2233.200 345.200H2246.800" stroke-width="2.800"/>
<!-- chart -->
<rect x="2292" y="336" width="24.200" height="24" rx="2.500" stroke-width="3.300"/><path d="M2298 356V345M2304.200 356V340M2310.500 356V351" stroke-width="3.200"/>
<!-- filter -->
<path d="M2356.500 337H2379.500L2368 349.500ZM2368 348V359.500" stroke-width="3.300" stroke-linejoin="round" stroke-linecap="round"/>
<!-- table -->
<path d="M2435.500 333.700H2415.500a2.800 2.800 0 0 0-2.800 2.800V357" stroke-width="3.100"/><rect x="2418.700" y="339.800" width="22.500" height="22.300" rx="2.200" stroke-width="3.300"/><path d="M2418.700 349.300H2441.200M2418.700 355.800H2441.200M2426 349.300V362M2433.800 349.300V362" stroke-width="2.600"/>
<path d="M2456 344H2472L2464 352.500Z" fill="#444746" stroke="none"/>
<!-- sigma -->
<text x="2507" y="359.600" font-size="33" font-weight="bold" fill="#444746" stroke="#444746" stroke-width="1.1" textLength="16.500" lengthAdjust="spacingAndGlyphs">Σ</text>
<path d="M2557 326V366" stroke="#c7c7c7" stroke-width="2"/>
<circle cx="2597" cy="339" r="3.100" fill="#444746" stroke="none"/><circle cx="2597" cy="348" r="3.100" fill="#444746" stroke="none"/><circle cx="2597" cy="357" r="3.100" fill="#444746" stroke="none"/>
<path d="M2671 353L2680 344L2689 353" stroke-width="3.300"/>
</svg>
<!-- formula bar -->
<div class="abs" style="left:0;top:402px;width:2768px;height:56px;background:#fff"></div>
<div class="t" style="left:29px;top:415.500px;font-size:26px;color:#1f1f1f;transform:scaleX(.875);transform-origin:0 0;-webkit-text-stroke:.3px #1f1f1f">E18:E29</div>
<div class="dd" style="left:172px;top:426px"></div>
<div class="abs" style="left:212px;top:414px;width:2px;height:34px;background:#c7c7c7"></div>
<div class="t" style="left:235px;top:412px;font-size:33px;font-family:'Liberation Serif',serif;color:#a0a0a0;line-height:33px"><span style="font-style:italic;font-size:31px;-webkit-text-stroke:.8px #a0a0a0;position:relative;top:1px">f</span><span style="font-weight:bold;font-size:37px;margin-left:-3px;position:relative;top:1px">x</span></div>
<div class="t" style="left:283px;top:416.500px;font-size:25px;letter-spacing:-.5px;color:#1f1f1f">Meringkas materi OSL dari Modul 1 Bab 3: &#39;Proses Penegakan Hukum Pidana di Sektor Pertambangan&#39;</div>
<!-- grid -->
<div id="grid" class="abs" style="left:0;top:458px;width:2768px;height:1100px;background:#fff;overflow:hidden">
<div class="abs" style="left:0;top:0;width:2768px;height:2px;background:#c0c0c0"></div>
<div class="abs" style="left:0;top:2px;width:82px;height:46px;background:#f8f9fa"></div>
<div class="abs" style="left:82px;top:2px;width:10px;height:48px;background:#c5c5c5"></div>
<div class="abs" style="left:2746px;top:2px;width:22px;height:100px;background:#f8f9fa"></div>
<div class="colh" style="left:92px;top:2px;width:84px;"></div>
<div class="colh" style="left:178px;top:2px;width:430px;">B</div>
<div class="colh" style="left:610px;top:2px;width:330px;">C</div>
<div class="colh" style="left:942px;top:2px;width:389px;">D</div>
<div class="colh" style="left:1333px;top:2px;width:1307px;background:#d3e3fd;color:#041e49;font-weight:bold;">E</div>
<div class="colh" style="left:2642px;top:2px;width:102px;padding-left:30px">F</div>
<div class="abs" style="left:176px;top:2px;width:2px;height:46px;background:#c0c0c0"></div>
<div class="abs" style="left:608px;top:2px;width:2px;height:46px;background:#c0c0c0"></div>
<div class="abs" style="left:940px;top:2px;width:2px;height:46px;background:#c0c0c0"></div>
<div class="abs" style="left:1331px;top:2px;width:2px;height:46px;background:#c0c0c0"></div>
<div class="abs" style="left:2640px;top:2px;width:2px;height:46px;background:#c0c0c0"></div>
<div class="abs" style="left:0;top:48px;width:2746px;height:2px;background:#c0c0c0"></div>
<div class="abs" style="left:92px;top:102px;width:2652px;height:2px;background:#e9e9e9"></div>
<div class="abs" style="left:177px;top:50px;width:431px;height:54px;background:#a0cf63;border-bottom:2px solid #8dbb55"></div>
<div class="abs" style="left:1332px;top:50px;width:1308px;height:54px;background:#a0cf63;border-bottom:2px solid #8dbb55"></div>
<div class="t" style="left:93px;width:600px;text-align:center;top:62px;font-size:29.33px;font-weight:bold;color:#000">Sasaran Kinerja GOALS</div>
<div class="t" style="left:475px;width:600px;text-align:center;top:62px;font-size:29.33px;font-weight:bold;color:#000">Kinerja Juli</div>
<div class="t" style="left:836.5px;width:600px;text-align:center;top:62px;font-size:29.33px;font-weight:bold;color:#000">Rencana Tugas</div>
<div class="t" style="left:1686.5px;width:600px;text-align:center;top:62px;font-size:29.33px;font-weight:bold;color:#000">Rincian Tugas</div>
<div class="t" style="left:2408px;width:600px;text-align:center;top:62px;font-size:29.33px;font-weight:bold;color:#000">No</div>
<div class="vl" style="left:176px;top:50px;height:52px"></div>
<div class="vl" style="left:608px;top:50px;height:52px"></div>
<div class="vl" style="left:940px;top:50px;height:52px"></div>
<div class="vl" style="left:1331px;top:50px;height:52px"></div>
<div class="vl" style="left:2640px;top:50px;height:52px"></div>
<div class="abs" style="left:0;top:104px;width:2746px;height:8px;background:#c8c8c8"></div>
<div class="abs" style="left:2746px;top:104px;width:22px;height:8px;background:#e3e7ee"></div>
<div class="abs" style="left:1333px;top:184px;width:1307px;height:920px;background:#e8eefc"></div>
<div class="vl" style="left:176px;top:112px;height:986px"></div>
<div class="vl" style="left:608px;top:112px;height:986px"></div>
<div class="vl" style="left:940px;top:112px;height:986px"></div>
<div class="vl" style="left:2640px;top:112px;height:986px"></div>
<div class="vl" style="left:1331px;top:112px;height:72px"></div>
<div class="vl" style="left:2744px;top:2px;height:1096px;background:#e0e0e0"></div>
<div class="hl" style="left:1333px;top:128px;width:1411px"></div>
<div class="hl" style="left:178px;top:182px;width:2566px"></div>
<div class="hl" style="left:1333px;top:270px;width:1307px;background:#cdd5e4"></div>
<div class="hl" style="left:2642px;top:270px;width:102px"></div>
<div class="hl" style="left:1333px;top:358px;width:1307px;background:#cdd5e4"></div>
<div class="hl" style="left:2642px;top:358px;width:102px"></div>
<div class="hl" style="left:1333px;top:446px;width:1307px;background:#cdd5e4"></div>
<div class="hl" style="left:2642px;top:446px;width:102px"></div>
<div class="hl" style="left:1333px;top:534px;width:1307px;background:#cdd5e4"></div>
<div class="hl" style="left:2642px;top:534px;width:102px"></div>
<div class="hl" style="left:1333px;top:622px;width:1307px;background:#cdd5e4"></div>
<div class="hl" style="left:2642px;top:622px;width:102px"></div>
<div class="hl" style="left:1333px;top:710px;width:1307px;background:#cdd5e4"></div>
<div class="hl" style="left:2642px;top:710px;width:102px"></div>
<div class="hl" style="left:1333px;top:798px;width:1307px;background:#cdd5e4"></div>
<div class="hl" style="left:2642px;top:798px;width:102px"></div>
<div class="hl" style="left:1333px;top:886px;width:1307px;background:#cdd5e4"></div>
<div class="hl" style="left:2642px;top:886px;width:102px"></div>
<div class="hl" style="left:1333px;top:974px;width:1307px;background:#cdd5e4"></div>
<div class="hl" style="left:2642px;top:974px;width:102px"></div>
<div class="hl" style="left:1333px;top:1062px;width:1307px;background:#cdd5e4"></div>
<div class="hl" style="left:2642px;top:1062px;width:102px"></div>
<div class="abs" style="left:0;top:50px;width:90px;height:1048px;background:#fff"></div>
<div class="rowh" style="top:50px;height:52px;line-height:52px">1</div>
<div class="rowh" style="top:112px;height:16px;line-height:16px"></div>
<div class="rowh" style="top:130px;height:52px;line-height:52px">17</div>
<div class="rowh sel" style="top:184px;height:86px;line-height:88px">18</div>
<div class="rowh sel" style="top:272px;height:86px;line-height:88px">19</div>
<div class="rowh sel" style="top:360px;height:86px;line-height:88px">20</div>
<div class="rowh sel" style="top:448px;height:86px;line-height:88px">21</div>
<div class="rowh sel" style="top:536px;height:86px;line-height:88px">22</div>
<div class="rowh sel" style="top:624px;height:86px;line-height:88px">23</div>
<div class="rowh sel" style="top:712px;height:86px;line-height:88px">24</div>
<div class="rowh sel" style="top:800px;height:86px;line-height:88px">25</div>
<div class="rowh sel" style="top:888px;height:86px;line-height:88px">26</div>
<div class="rowh sel" style="top:976px;height:86px;line-height:88px">27</div>
<div class="rowh sel" style="top:1064px;height:40px;line-height:40px"></div>
<div class="abs" style="left:0;top:128px;width:90px;height:2px;background:#c0c0c0"></div>
<div class="abs" style="left:0;top:182px;width:90px;height:2px;background:#c0c0c0"></div>
<div class="abs" style="left:0;top:270px;width:90px;height:2px;background:#c0c0c0"></div>
<div class="abs" style="left:0;top:358px;width:90px;height:2px;background:#c0c0c0"></div>
<div class="abs" style="left:0;top:446px;width:90px;height:2px;background:#c0c0c0"></div>
<div class="abs" style="left:0;top:534px;width:90px;height:2px;background:#c0c0c0"></div>
<div class="abs" style="left:0;top:622px;width:90px;height:2px;background:#c0c0c0"></div>
<div class="abs" style="left:0;top:710px;width:90px;height:2px;background:#c0c0c0"></div>
<div class="abs" style="left:0;top:798px;width:90px;height:2px;background:#c0c0c0"></div>
<div class="abs" style="left:0;top:886px;width:90px;height:2px;background:#c0c0c0"></div>
<div class="abs" style="left:0;top:974px;width:90px;height:2px;background:#c0c0c0"></div>
<div class="abs" style="left:0;top:1062px;width:90px;height:2px;background:#c0c0c0"></div>
<div class="abs" style="left:90px;top:50px;width:2px;height:1048px;background:#c0c0c0"></div>
<div class="abs" style="left:0;top:102px;width:90px;height:2px;background:#c0c0c0"></div>
<div class="abs" style="left:0;top:104px;width:92px;height:8px;background:#c8c8c8"></div>
<div class="abs" style="left:1331.500px;top:182px;width:2px;height:920px;background:#3a74dd"></div>
<div class="abs" style="left:2640px;top:182px;width:2px;height:920px;background:#3a74dd"></div>
<div class="abs" style="left:1331.500px;top:182px;width:1310.500px;height:90px;border:4px solid #3a74dd"></div>
<div class="gridtxt" style="left:184.5px;top:871.5px">Pegawai:<br>Tersedianya materi dan media<br>pembelajaran digital untuk topik<br>Hukum Pertambangan Lanjutan</div>
<div class="gridtxt" style="left:616.5px;top:795.5px">Menyediakan media<br>pembelajaran digital<br>dengan topik Hukum<br>Pertambangan Lanjutan<br>dalam bentuk video</div>
<div class="gridtxt" style="left:948.5px;top:601.5px">Pembuatan video<br>pembelajaran OSL Hukum<br>Pertambangan Lanjutan -<br>Modul 1 Bab 3: &#39;Proses<br>Penegakan Hukum Pidana<br>di Sektor Pertambangan&#39;</div>
<div class="gridtxt" style="left:1340.5px;top:190px">Meringkas materi OSL dari Modul 1 Bab 3: &#39;Proses Penegakan Hukum Pidana di Sektor<br>Pertambangan&#39;</div>
<div class="gridtxt" style="left:1340.5px;top:278px">Membuat naskah narasi untuk Modul 1 Bab 3: &#39;Proses Penegakan Hukum Pidana di Sektor<br>Pertambangan&#39;</div>
<div class="gridtxt" style="left:1340.5px;top:366px">Merancang storyboard untuk Modul 1 Bab 3: &#39;Proses Penegakan Hukum Pidana di Sektor<br>Pertambangan&#39;</div>
<div class="gridtxt" style="left:1340.5px;top:454px">Menyusun komposisi video animasi untuk Topik : &#39;Tahapan Proses Penegakan Hukum Pidana di<br>Sektor Pertambangan&#39;</div>
<div class="gridtxt" style="left:1340.5px;top:542px">Menyusun komposisi video animasi untuk Topik : &#39;Pra-Peradilan dan Restorative Justice Sebagai<br>Bagian dari Hukum Pidana&#39;</div>
<div class="gridtxt" style="left:1340.5px;top:648px">Menyusun komposisi video animasi untuk Topik : &#39;Upaya Hukum dalam Proses Pidana&#39;</div>
<div class="gridtxt" style="left:1340.5px;top:718px">Membuat ilustrasi dan aset visual untuk topik: &#39;Tahapan Proses Penegakan Hukum Pidana di<br>Sektor Pertambangan&#39;</div>
<div class="gridtxt" style="left:1340.5px;top:806px">Membuat ilustrasi dan aset visual untuk Topik : &#39;Pra-Peradilan dan Restorative Justice Sebagai<br>Bagian dari Hukum Pidana&#39;</div>
<div class="gridtxt" style="left:1340.5px;top:912px">Membuat ilustrasi dan aset visual untuk Topik : &#39;Upaya Hukum dalam Proses Pidana&#39;</div>
<div class="gridtxt" style="left:1340.5px;top:982px">Merancang gerakan dan animasi visual untuk topik: &#39;Tahapan Proses Penegakan Hukum Pidana di<br>Sektor Pertambangan&#39;</div>
<div class="gridtxt" style="left:1340.5px;top:1070px">Merancang gerakan dan animasi visual untuk Topik : &#39;Pra-Peradilan dan Restorative Justice<br>Sebagai Bagian dari Hukum Pidana&#39;</div>
<div class="abs" style="left:0;top:1098px;width:2768px;height:2px;background:#e1e1e1"></div>
<div class="abs" style="left:2748px;top:282px;width:17px;height:177px;border-radius:9px;background:#dadce0"></div>
<div class="abs" style="left:2746px;top:1035px;width:22px;height:30px;background:#f8f9fa;border:2px solid #e3e3e3;border-right:0"></div>
<div class="abs" style="left:2746px;top:1067px;width:22px;height:31px;background:#f8f9fa;border:2px solid #e3e3e3;border-right:0"></div>
<div class="abs" style="left:2752px;top:1046px;width:0;height:0;border-left:6px solid transparent;border-right:6px solid transparent;border-bottom:7px solid #9e9e9e"></div>
<div class="abs" style="left:2752px;top:1079px;width:0;height:0;border-left:6px solid transparent;border-right:6px solid transparent;border-top:7px solid #9e9e9e"></div>
</div>
<!-- h scroll row -->
<div class="abs" style="left:0;top:1558px;width:2768px;height:23px;background:#fff"></div>
<div class="abs" style="left:0;top:1558px;width:90px;height:23px;background:#f8f9fa"></div>
<div class="abs" style="left:90px;top:1558px;width:3px;height:23px;background:#dcdcdc"></div>
<div class="abs" style="left:220px;top:1560px;width:1870px;height:18px;border-radius:9px;background:#dadce0"></div>
<div class="abs" style="left:2682px;top:1558px;width:32px;height:23px;background:#f8f9fa;border-left:2px solid #e3e3e3"></div>
<div class="abs" style="left:2714px;top:1558px;width:32px;height:23px;background:#f8f9fa;border-left:2px solid #e3e3e3"></div>
<div class="abs" style="left:2746px;top:1558px;width:22px;height:23px;background:#f8f9fa;border-left:3px solid #e3e3e3"></div>
<div class="abs" style="left:2693px;top:1563px;width:0;height:0;border-top:6px solid transparent;border-bottom:6px solid transparent;border-right:7px solid #9e9e9e"></div>
<div class="abs" style="left:2728px;top:1563px;width:0;height:0;border-top:6px solid transparent;border-bottom:6px solid transparent;border-left:7px solid #9e9e9e"></div>
<div class="abs" style="left:0;top:1581px;width:2768px;height:2px;background:#e1e3e1"></div>
<!-- sheet tabs -->
<div class="abs" style="left:1715px;top:1583px;width:205px;height:72px;background:#e1e9f7"></div>
<svg style="left:108px;top:1606px" width="30" height="30" viewBox="0 0 30 30"><path d="M15 4.500V25.500M4.500 15H25.500" stroke="#444746" stroke-width="3.200" fill="none"/></svg>
<svg style="left:187px;top:1606px" width="32" height="30" viewBox="0 0 32 30"><path d="M2 6.500H30M2 15H30M2 23.500H30" stroke="#444746" stroke-width="3.200" fill="none"/></svg>
<div class="sheettab" style="left:294px;letter-spacing:.58px">Agust_TL</div><div class="dd" style="left:442px;top:1618px"></div>
<div class="sheettab" style="left:509px;letter-spacing:.65px">Agust_HSF</div><div class="dd" style="left:681px;top:1618px"></div>
<div class="sheettab" style="left:755px;letter-spacing:1.4px">Agust_khaidir</div><div class="dd" style="left:967px;top:1618px"></div>
<div class="sheettab" style="left:1034px;letter-spacing:.9px">Agust_Reza</div><div class="dd" style="left:1216px;top:1618px"></div>
<div class="sheettab" style="left:1283px;letter-spacing:.5px">Agust_RC</div><div class="dd" style="left:1439px;top:1618px"></div>
<div class="sheettab" style="left:1505.500px;letter-spacing:.9px">Agust_IEM</div><div class="dd" style="left:1673px;top:1618px"></div>
<div class="sheettab" style="left:1738px;letter-spacing:.65px;color:#1a56c8;font-weight:bold;-webkit-text-stroke:0">Juli_IMK</div><div class="dd" style="left:1881px;top:1618px;border-top-color:#1a56c8"></div>
<div class="t" style="right:134.500px;top:1606px;font-size:28px;color:#0f2613;-webkit-text-stroke:.6px #0f2613;letter-spacing:-.15px">Count: 12</div>
<!-- side panel -->
<!-- calendar -->
<svg style="left:2805px;top:331px" width="38" height="38" viewBox="0 0 38 38"><rect x="0" y="0" width="38" height="38" rx="4" fill="#4285f4"/><rect x="29.500" y="8.500" width="8.500" height="21" fill="#fbbc04"/><rect x="8.500" y="29.500" width="21" height="8.500" fill="#34a853"/><path d="M0 29.500H8.500V38H4a4 4 0 0 1-4-4Z" fill="#188038"/><path d="M29.500 0H34a4 4 0 0 1 4 4V8.500H29.500Z" fill="#1967d2"/><path d="M29.500 29.500H38L29.500 38Z" fill="#ea4335"/><path d="M38 29.500V38H29.500Z" fill="#f9fbfd"/><rect x="8.500" y="8.500" width="21" height="21" fill="#fff"/><text x="19" y="25.300" font-family="Liberation Sans, sans-serif" font-size="17" fill="#4285f4" stroke="#4285f4" stroke-width=".5" text-anchor="middle" letter-spacing="-.6">31</text></svg>
<!-- keep -->
<svg style="left:2805px;top:443px" width="38" height="38" viewBox="0 0 38 38"><rect width="38" height="38" rx="4.500" fill="#f2bc42"/><circle cx="19" cy="17" r="8" fill="#fff"/><rect x="15" y="26.500" width="8" height="3" fill="#fff"/></svg>
<!-- tasks -->
<svg style="left:2804px;top:554px" width="40" height="40" viewBox="0 0 40 40"><circle cx="19.500" cy="20.500" r="13.800" stroke="#4285f4" stroke-width="6" fill="none"/><path d="M12.500 19.500L18 25L27.500 15.500" stroke="#4285f4" stroke-width="5.500" fill="none"/><path d="M27.500 13.500L35.500 5.500" stroke="#2a62d4" stroke-width="6" stroke-linecap="butt"/></svg>
<!-- contacts -->
<svg style="left:2808px;top:666px" width="32" height="38" viewBox="0 0 32 38"><circle cx="15.800" cy="9.800" r="7" fill="#2456c9"/><path d="M2 36V27a8 8 0 0 1 8-8H22a8 8 0 0 1 8 8V33a3 3 0 0 1-3 3Z" fill="#8aa6f4"/><path d="M7.500 36V24a5 5 0 0 1 5-5H19.500a5 5 0 0 1 5 5V36Z" fill="#2456c9"/></svg>
<!-- maps -->
<svg style="left:2810px;top:778px" width="28" height="40" viewBox="0 0 28 40"><defs><clipPath id="pin"><path d="M14 1A13 13 0 0 0 1 14c0 6 3.500 10 7 14.500 2.800 3.500 4 6.500 4.800 9.500.3 1 .6 1.500 1.200 1.500s.9-.5 1.200-1.500c.8-3 2-6 4.800-9.500C23.500 24 27 20 27 14A13 13 0 0 0 14 1Z"/></clipPath></defs><g clip-path="url(#pin)"><rect width="28" height="40" fill="#34a853"/><path d="M0 0H28V10L14 14 0 10Z" fill="#4285f4"/><path d="M0 0H10L14 14 0 26Z" fill="#ea4335"/><path d="M14 14L24 3 28 0V12Z" fill="#5a95f5"/><path d="M14 14L0 26 6 34 22 8Z" fill="#fbbc04" opacity="0"/><path d="M2.500 21L14 14 8 31Z" fill="#fbbc04"/><path d="M0 0H8L14 14 3 23 0 18Z" fill="#ea4335"/><path d="M5 3H22L27 8 14 14Z" fill="#4285f4"/></g><circle cx="14" cy="14" r="5" fill="#fff"/></svg>
<div class="abs" style="left:2804px;top:886px;width:40px;height:2px;background:#dadce0"></div>
<svg style="left:2810px;top:961px" width="28" height="28" viewBox="0 0 28 28"><path d="M14 .5V27.500M.5 14H27.500" stroke="#111" stroke-width="3.600" fill="none"/></svg>
<svg style="left:2812px;top:1586px" width="24" height="28" viewBox="0 0 24 28"><path d="M7.500 5L17.500 14L7.500 23" stroke="#5f6368" stroke-width="3.200" fill="none"/></svg>
<!-- dock -->
<div class="abs" style="left:778px;top:1658px;width:1324px;height:84px;border-radius:23px;background:#58595a;box-shadow:inset 0 0 0 1.500px #7b7c7d,0 0 30px 6px rgba(0,0,0,.2)"></div>
<svg style="left:770px;top:1650px" width="1340" height="102" viewBox="770 1650 1340 102" font-family="Liberation Sans, sans-serif">
<defs>
<linearGradient id="gFinL" x1="0" y1="0" x2="0" y2="1"><stop offset="0" stop-color="#4aa8f7"/><stop offset="1" stop-color="#1a6be0"/></linearGradient>
<linearGradient id="gFinR" x1="0" y1="0" x2="0" y2="1"><stop offset="0" stop-color="#f2f5fa"/><stop offset="1" stop-color="#cfd6e2"/></linearGradient>
<linearGradient id="gKey" x1="0" y1="0" x2="0" y2="1"><stop offset="0" stop-color="#45b0ff"/><stop offset="1" stop-color="#2a66ee"/></linearGradient>
<linearGradient id="gRed" x1="0" y1="0" x2="0" y2="1"><stop offset="0" stop-color="#ee5245"/><stop offset="1" stop-color="#cf2a20"/></linearGradient>
<linearGradient id="gSet" x1="0" y1="0" x2="0" y2="1"><stop offset="0" stop-color="#dcdcdc"/><stop offset="1" stop-color="#8f8f8f"/></linearGradient>
<linearGradient id="gRain" x1="0" y1="0" x2="1" y2="1"><stop offset="0" stop-color="#3cc7c1"/><stop offset=".35" stop-color="#5b7fe8"/><stop offset=".6" stop-color="#e25a9a"/><stop offset=".8" stop-color="#f08a3c"/><stop offset="1" stop-color="#e8dc4a"/></linearGradient>
<radialGradient id="gPlanet" cx=".9" cy=".4" r=".95"><stop offset="0" stop-color="#dcc8a6"/><stop offset=".28" stop-color="#b39a78"/><stop offset=".5" stop-color="#5a4a38"/><stop offset=".68" stop-color="#0e0b08"/><stop offset="1" stop-color="#000"/></radialGradient>
<linearGradient id="gQT" x1="0" y1="0" x2="0" y2="1"><stop offset="0" stop-color="#3c3d41"/><stop offset="1" stop-color="#0b0b0c"/></linearGradient>
<radialGradient id="gQTb" cx=".5" cy=".6" r=".6"><stop offset="0" stop-color="#66e0ff"/><stop offset="1" stop-color="#2d7df0"/></radialGradient>
<linearGradient id="gPhone" x1="0" y1="0" x2="1" y2="1"><stop offset="0" stop-color="#f3c3b4"/><stop offset=".38" stop-color="#e8756a"/><stop offset=".5" stop-color="#e9e9ee"/><stop offset=".62" stop-color="#2d7fa3"/><stop offset="1" stop-color="#123a5c"/></linearGradient>
<linearGradient id="gSky" x1="0" y1="0" x2="0" y2="1"><stop offset="0" stop-color="#9db3e4"/><stop offset=".55" stop-color="#b9c9ea"/><stop offset=".6" stop-color="#2f5f9e"/><stop offset=".8" stop-color="#dfe8f2"/><stop offset="1" stop-color="#7f8a8c"/></linearGradient>
<linearGradient id="gTrash" x1="0" y1="0" x2="1" y2="0"><stop offset="0" stop-color="#d5d7d9"/><stop offset=".5" stop-color="#f3f4f5"/><stop offset="1" stop-color="#c3c5c8"/></linearGradient>
<clipPath id="cFin"><rect x="792" y="1672" width="50" height="50" rx="11.500"/></clipPath>
<clipPath id="cCal"><rect x="1056" y="1672" width="50" height="50" rx="11.500"/></clipPath>
<clipPath id="cPrev"><rect x="1814" y="1676" width="42" height="42" rx="7"/></clipPath>
</defs>
<!-- finder -->
<g clip-path="url(#cFin)"><rect x="792" y="1672" width="50" height="50" fill="url(#gFinL)"/><path d="M820 1672C815 1684 813.500 1694 813 1702H820.500C820.500 1710 821.500 1717 823 1722H842V1672Z" fill="url(#gFinR)"/></g>
<path d="M820 1672.500C815 1684 813.500 1694 813 1702H820.500C820.500 1710 821.500 1717 823 1722" stroke="#1d2b45" stroke-width="1.200" fill="none" opacity=".8"/>
<path d="M805 1686V1691M829.500 1686V1691" stroke="#1d2b45" stroke-width="2.200" stroke-linecap="round"/>
<path d="M802 1706C808 1713 826 1713 832.500 1705.500" stroke="#1d2b45" stroke-width="1.900" fill="none" stroke-linecap="round"/>
<!-- launchpad -->
<rect x="858" y="1672" width="50" height="50" rx="11.500" fill="#cbcbcb"/>
<g><rect x="866.500" y="1680.500" width="9" height="9" rx="2.300" fill="#55d63f"/><rect x="878.500" y="1680.500" width="9" height="9" rx="2.300" fill="#f8c22d"/><rect x="890.500" y="1680.500" width="9" height="9" rx="2.300" fill="#f39a25"/>
<rect x="866.500" y="1692.500" width="9" height="9" rx="2.300" fill="#d63a2c"/><rect x="878.500" y="1692.500" width="9" height="9" rx="2.300" fill="#b5bcc1"/><rect x="890.500" y="1692.500" width="9" height="9" rx="2.300" fill="#e8476a"/>
<rect x="866.500" y="1704.500" width="9" height="9" rx="2.300" fill="#9b55d8"/><rect x="878.500" y="1704.500" width="9" height="9" rx="2.300" fill="#2f86ea"/><rect x="890.500" y="1704.500" width="9" height="9" rx="2.300" fill="#62d3b5"/></g>
<!-- mission -->
<rect x="924" y="1672" width="50" height="50" rx="11.500" fill="#000"/>
<rect x="928" y="1679.500" width="22.500" height="14.500" fill="#d6d6d6"/><rect x="930" y="1699.500" width="20" height="14" fill="#d6d6d6"/><rect x="953" y="1686" width="18" height="22" fill="#d0d0d0"/>
<rect x="936.500" y="1690.500" width="6" height="6" rx="1.200" fill="#5fd54a"/><rect x="937.500" y="1711" width="6" height="6" rx="1.200" fill="#3a9cf2"/><rect x="959" y="1704.500" width="6" height="6" rx="1.200" fill="#a15ad8"/>
<!-- chrome -->
<rect x="990" y="1672" width="50" height="50" rx="11.500" fill="#f4f4f4"/>
<g transform="translate(1015 1697)"><path d="M-18.620 -10.750A21.500 21.500 0 0 1 18.620 -10.750L0 -10.750A10.750 10.750 0 0 0 -9.310 5.375Z" fill="#e8453c"/><path d="M-18.620 -10.750A21.500 21.500 0 0 0 0 21.500L9.310 5.375A10.750 10.750 0 0 1 -9.310 5.375Z" fill="#34a353"/><path d="M0 21.500A21.500 21.500 0 0 0 18.620 -10.750L0 -10.750A10.750 10.750 0 0 1 9.310 5.375Z" fill="#fcc934"/><circle r="10" fill="#fff"/><circle r="7.800" fill="#4285f4"/></g>
<!-- calendar -->
<g clip-path="url(#cCal)"><rect x="1056" y="1672" width="50" height="50" fill="#f7f6f4"/><rect x="1056" y="1672" width="50" height="14.500" fill="#e9534a"/></g>
<text x="1081" y="1684" font-size="9.500" font-weight="bold" fill="#fff" text-anchor="middle">JUL</text>
<text x="1081" y="1714.500" font-size="31" fill="#2b2b2b" text-anchor="middle" letter-spacing="-.5">30</text>
<!-- terminal -->
<rect x="1122.800" y="1672.800" width="48.400" height="48.400" rx="11" fill="#101010" stroke="#aebdc3" stroke-width="1.600"/><rect x="1127" y="1677" width="40" height="40" rx="7" fill="#242424"/>
<path d="M1131.500 1682L1137 1685L1131.500 1688" stroke="#fff" stroke-width="1.600" fill="none"/><path d="M1139 1690.500H1146" stroke="#fff" stroke-width="1.600"/>
<!-- anydesk -->
<rect x="1188" y="1672" width="50" height="50" rx="11.500" fill="#ef4b3b"/>
<path d="M1195 1697L1207.500 1684.500L1220 1697L1207.500 1709.500Z" fill="#fff"/><path d="M1216.500 1685.500L1228 1697L1216.500 1708.500" stroke="#fff" stroke-width="4" fill="none"/>
<!-- !m -->
<rect x="1254" y="1672" width="50" height="50" rx="11.500" fill="url(#gRed)"/>
<text x="1260" y="1709.500" font-size="34" font-weight="bold" fill="#fff" textLength="38" lengthAdjust="spacingAndGlyphs">!m</text>
<!-- keynote -->
<rect x="1320" y="1672" width="50" height="50" rx="11.500" fill="url(#gKey)"/>
<path d="M1333 1680.500H1357L1360 1692.500H1330Z" fill="#f4f6f8"/><rect x="1330" y="1692.500" width="30" height="2.200" fill="#cfd6df"/><path d="M1345 1694.500V1713.500M1337.500 1714H1352.500" stroke="#e8ecf0" stroke-width="2.200"/>
<circle cx="1345" cy="1685.500" r="3.600" fill="#f1b838"/><path d="M1345 1685.500V1681.900A3.600 3.600 0 0 1 1348.600 1685.500Z" fill="#57b85b"/><path d="M1345 1685.500H1341.400A3.600 3.600 0 0 1 1345 1681.900Z" fill="#e2574c"/>
<!-- davinci -->
<rect x="1387" y="1673" width="48" height="48" rx="10.500" fill="#27344e" stroke="url(#gRain)" stroke-width="2"/>
<path d="M1411 1682c3.800 0 6 3 6 6 0 3.500-3.500 6-6 9.500-2.500-3.500-6-6-6-9.500 0-3 2.200-6 6-6Z" fill="#5fd0e8"/>
<path d="M1409.500 1700.500c-4 .8-7.500-.5-10 1.800-2.300 2.200-2.600 5.800-.3 8.200 2.400 2.400 6 2 8.200-.4 2.300-2.600 1.200-6 2.100-9.600Z" fill="#e4e052"/>
<path d="M1412.500 1700.500c4 .8 7.500-.5 10 1.800 2.300 2.200 2.600 5.800.3 8.200-2.400 2.400-6 2-8.200-.4-2.300-2.600-1.200-6-2.100-9.600Z" fill="#ee6c6a"/>
<!-- planet -->
<circle cx="1451" cy="1683.500" r="4" fill="#8a7558"/><circle cx="1477" cy="1697" r="28" fill="url(#gPlanet)"/><circle cx="1494" cy="1703" r="3.600" fill="#4a3a2a"/>
<!-- settings -->
<rect x="1518" y="1672" width="50" height="50" rx="11.500" fill="url(#gSet)"/>
<circle cx="1543" cy="1697" r="19.500" fill="none" stroke="#55575a" stroke-width="3" stroke-dasharray="1.500 1.300"/><circle cx="1543" cy="1697" r="16.500" fill="#8f9194" stroke="#6a6c6f" stroke-width="1.500"/><circle cx="1543" cy="1697" r="11.500" fill="none" stroke="#4c4e51" stroke-width="2.600"/><path d="M1543 1697V1685.500M1543 1697L1533 1702.800M1543 1697L1553 1702.800" stroke="#4c4e51" stroke-width="2.400"/><circle cx="1543" cy="1697" r="2.600" fill="#d5d5d5"/>
<circle cx="1563" cy="1676.700" r="12" fill="#e5483d"/><text x="1563" y="1682" font-size="14.500" fill="#fff" text-anchor="middle">1</text>
<!-- iphone mirroring -->
<rect x="1584" y="1672" width="50" height="50" rx="11.500" fill="#c9c9ca"/>
<rect x="1598" y="1676" width="21.500" height="42.500" rx="4.500" fill="#1a1a1c"/><rect x="1599.600" y="1677.600" width="18.300" height="39.300" rx="3.300" fill="url(#gPhone)"/><rect x="1605.500" y="1678.800" width="6.500" height="2.200" rx="1.100" fill="#111"/>
<path d="M1657 1670V1729.500" stroke="#2b2b2c" stroke-width="2"/>
<!-- quicktime -->
<rect x="1678" y="1672" width="50" height="50" rx="11.500" fill="url(#gQT)"/>
<circle cx="1703" cy="1696" r="17" fill="url(#gQTb)" stroke="#cfd3da" stroke-width="7"/><path d="M1707 1701L1720 1714" stroke="#cfd3da" stroke-width="7.500" stroke-linecap="round"/><path d="M1700 1694L1708 1702" stroke="#dfe3e8" stroke-width="6.500" stroke-linecap="round"/>
<!-- activity monitor -->
<rect x="1745.500" y="1672.800" width="48.400" height="48.400" rx="11" fill="#0d1210" stroke="#b9c6c8" stroke-width="1.600"/><rect x="1749.500" y="1677" width="40.500" height="40" rx="7" fill="#1c2a26"/>
<path d="M1758 1678V1716M1766 1678V1716M1774 1678V1716M1782 1678V1716M1750 1686H1790M1750 1694H1790M1750 1702H1790M1750 1710H1790" stroke="#34504a" stroke-width=".8"/>
<path d="M1750 1701H1755L1757 1704L1759.500 1681L1762 1708L1764 1701L1768 1702C1770 1693 1773 1693 1775 1700C1777 1705 1779 1696 1781 1699L1786 1702" stroke="#8fe6cf" stroke-width="1.500" fill="none"/>
<!-- preview -->
<rect x="1810.500" y="1672.500" width="49" height="49" rx="11" fill="#f3f3f3"/>
<g clip-path="url(#cPrev)"><rect x="1814" y="1676" width="42" height="42" fill="url(#gSky)"/></g>
<path d="M1835 1701H1857L1860.500 1722H1832.500Z" fill="#d9dde0" opacity=".92"/><rect x="1835" y="1696.500" width="22" height="8" rx="3" fill="#151515"/><ellipse cx="1846" cy="1697" rx="11" ry="2.600" fill="#2e2e2e"/>
<path d="M1885 1670V1729.500" stroke="#2b2b2c" stroke-width="2"/>
<!-- doc thumbnail -->
<rect x="1905" y="1682" width="52" height="34" fill="#fff" stroke="#d0d0d0" stroke-width=".8"/>
<rect x="1906.500" y="1684" width="49" height="1.600" fill="#c9c2bb"/><rect x="1911" y="1688" width="8" height="1.500" fill="#7cc04f"/><rect x="1931" y="1688" width="23" height="1.500" fill="#7cc04f"/><rect x="1931" y="1705.500" width="22" height="6" fill="#ecec3c"/>
<path d="M1911 1692H1918M1911 1696H1917M1911 1700H1918M1911 1704H1916M1911 1708H1918M1921 1692H1928M1921 1697H1928M1921 1702H1928M1931 1692H1950M1931 1695H1948M1931 1698H1950M1931 1701H1946" stroke="#9a9a9a" stroke-width=".9"/><rect x="1906" y="1713" width="50" height="1.800" fill="#333"/>
<!-- doc stack -->
<rect x="1977" y="1676" width="4" height="42" fill="#2b2b2b"/><rect x="1979" y="1672" width="38" height="26" fill="#ececec" stroke="#cfcfcf" stroke-width=".7"/><rect x="1981" y="1671" width="34" height="54.500" fill="#fbfbfb" stroke="#cfcfcf" stroke-width=".7"/>
<path d="M2002 1671H2015V1686H2005a3 3 0 0 1-3-3Z" fill="#e6e6e6" stroke="#c6c6c6" stroke-width=".7"/>
<path d="M1984 1680H1999M1984 1684H1997M1984 1693H2012M1984 1696H2012M1984 1699H2010M1984 1702H1996M1984 1706H1994M1984 1709H2012M1984 1712H2006" stroke="#8c8c8c" stroke-width=".9"/><rect x="1999" y="1714" width="5" height="5" fill="#444"/>
<!-- trash -->
<path d="M2041.500 1677C2041.500 1673 2051 1670 2063 1670S2084.500 1673 2084.500 1677L2079.500 1719C2079 1722.500 2072 1724.500 2063 1724.500S2047 1722.500 2046.500 1719Z" fill="url(#gTrash)" opacity=".93"/>
<ellipse cx="2063" cy="1677" rx="21.500" ry="6.500" fill="#b9bcc0"/><ellipse cx="2063" cy="1677" rx="19" ry="5" fill="#e9eaec"/>
<path d="M2048 1676L2052 1668L2058 1673L2063 1667L2068 1674L2075 1668L2079 1676C2072 1680 2054 1680 2048 1676Z" fill="#f4f4f4"/><path d="M2054 1672L2058 1673L2056 1676ZM2066 1671L2071 1673L2068 1676Z" fill="#3f7fd6"/><path d="M2060 1670L2064 1672L2061 1675Z" fill="#d95b3a"/><path d="M2070 1670L2074 1671L2072 1674Z" fill="#333"/>
<!-- running dots -->
<circle cx="816" cy="1734" r="3.800" fill="#000"/><circle cx="1014" cy="1734" r="3.800" fill="#000"/><circle cx="1768" cy="1734" r="3.800" fill="#000"/>
</svg>
</div>
</body>
</html>
